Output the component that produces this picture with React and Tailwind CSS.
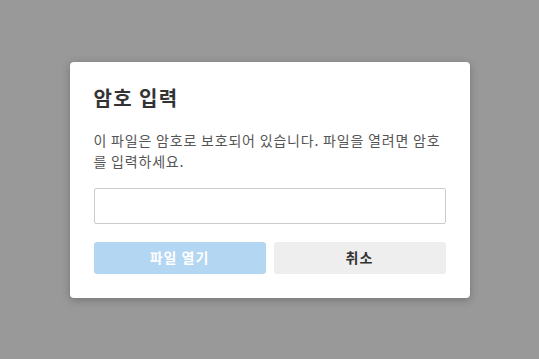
export default function App() {
  return (
    <div
      className="w-[539px] h-[359px] bg-[#999999] flex items-center justify-center"
      style={{ fontFamily: '"Noto Sans CJK KR", "Noto Sans", sans-serif' }}
    >
      <div className="w-[400px] bg-white rounded-[4px] p-6 shadow-[0_2px_8px_rgba(0,0,0,0.25)]">
        <h2 className="text-[20px] leading-[24px] font-bold tracking-[1.4px] text-[#333333]">암호 입력</h2>
        <p className="mt-5 text-[14px] leading-[21px] tracking-[0.8px] text-[#555555]">
          이 파일은 암호로 보호되어 있습니다. 파일을 열려면 암호를 입력하세요.
        </p>
        <input
          type="password"
          className="mt-4 block w-full h-[36px] border border-[#cccccc] rounded-[2px] outline-none px-2"
        />
        <div className="mt-[18px] flex gap-2">
          <button className="flex-1 h-[32px] rounded-[3px] bg-[#b3d6f2] text-white text-[14px] font-bold tracking-[1px]">
            파일 열기
          </button>
          <button className="flex-1 h-[32px] rounded-[3px] bg-[#eeeeee] text-[#333333] text-[14px] font-bold tracking-[1px]">
            취소
          </button>
        </div>
      </div>
    </div>
  );
}
